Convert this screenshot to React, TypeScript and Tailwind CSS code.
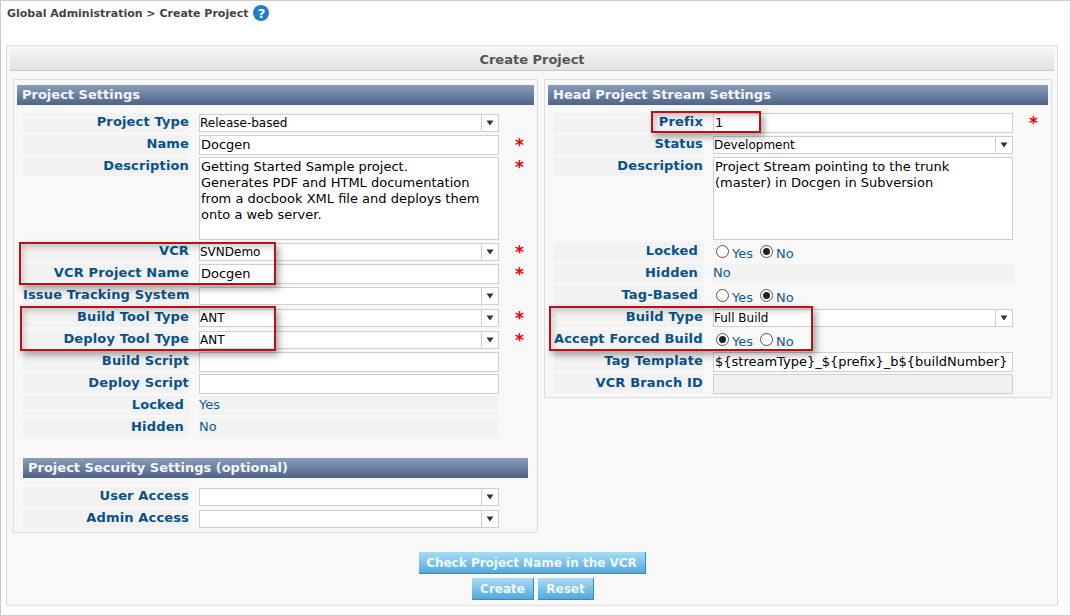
import type { ReactNode } from 'react'

const font = "font-['DejaVu_Sans','Liberation_Sans',sans-serif]"

function Bar({ children, className = '' }: { children: ReactNode; className?: string }) {
  return (
    <div
      className={`flex h-[20px] items-center bg-gradient-to-b from-[#8c9dbb] to-[#4f6488] px-[5px] text-[13px] font-bold text-[#f4f6fa] ${className}`}
    >
      {children}
    </div>
  )
}

function Field({
  label,
  star,
  tall,
  narrow,
  inset,
  children,
}: {
  label: string
  star?: boolean
  tall?: boolean
  narrow?: boolean
  inset?: boolean
  children?: ReactNode
}) {
  return (
    <div className={`mb-[3px] flex items-start ${tall ? 'h-[82px]' : 'h-[19px]'}`}>
      <div
        className={`h-[19px] shrink-0 whitespace-nowrap bg-[#f2f2f2] text-right text-[13px] leading-[18px] font-bold tracking-[0.15px] text-[#07518a] ${
          narrow ? 'w-[149px]' : 'w-[166px]'
        } ${inset ? 'pr-[5px]' : ''}`}
      >
        {label}
      </div>
      <div className="ml-[10px] h-full w-[300px] shrink-0">{children}</div>
      {star && (
        <span className="ml-[16px] text-[17px] leading-[20px] font-bold text-[#f00000]">
          *
        </span>
      )}
    </div>
  )
}

function Select({ value = '' }: { value?: string }) {
  return (
    <div className="mt-[1px] flex h-[18px] border border-[#cfcfcf] bg-white text-[12px] leading-[17px] text-black">
      <div className="flex-1 whitespace-nowrap">{value}</div>
      <div className="flex w-[17px] items-center justify-center border-l border-[#cfcfcf]">
        <svg width="8" height="6" viewBox="0 0 8 6">
          <path d="M0.5 0.5h7L4 5.5z" fill="#333" />
        </svg>
      </div>
    </div>
  )
}

function Input({ value = '', disabled }: { value?: string; disabled?: boolean }) {
  return (
    <input
      readOnly
      value={value}
      className={`block h-[20px] w-full border border-[#cfcfcf] px-[1px] pb-[2px] text-[13px] text-black outline-none ${
        disabled ? 'bg-[#f0f0f0]' : 'bg-white'
      }`}
    />
  )
}

function Area({ value }: { value: string }) {
  return (
    <textarea
      readOnly
      value={value}
      className="block h-[83px] w-full resize-none overflow-hidden border border-[#cfcfcf] bg-white px-[1px] pt-[1px] text-[13px] leading-[16px] text-black outline-none"
    />
  )
}

function Static({ children }: { children: ReactNode }) {
  return <div className="h-[19px] bg-[#f2f2f2] text-[13px] leading-[18px] text-[#0f5a8f]">{children}</div>
}

function Radio({ on, label }: { on?: boolean; label: string }) {
  return (
    <span className="mr-[7px] inline-flex items-start">
      <span className="mt-[3px] flex h-[13px] w-[13px] items-center justify-center rounded-full border border-[#555] bg-white">
        {on && <span className="h-[7px] w-[7px] rounded-full bg-[#222]" />}
      </span>
      <span className="mt-[4px] ml-[3px] text-[13px] leading-[16px] text-[#0f5a8f]">{label}</span>
    </span>
  )
}

function YesNo({ yes }: { yes?: boolean }) {
  return (
    <div className="flex h-[19px] pl-[3px]">
      <Radio on={yes} label="Yes" />
      <Radio on={!yes} label="No" />
    </div>
  )
}

function Button({ children, className = '' }: { children: ReactNode; className?: string }) {
  return (
    <button
      type="button"
      className={`h-[22px] border-r border-b border-[#2f8fc9] bg-gradient-to-b from-[#a9dcf5] to-[#4fa9de] pt-[1px] text-[12px] font-bold text-[#eefaff] ${className}`}
    >
      {children}
    </button>
  )
}

function Callout({ className }: { className: string }) {
  return (
    <div
      className={`pointer-events-none absolute border-2 border-[#b5121b] shadow-[3px_4px_7px_rgba(0,0,0,0.35),inset_4px_5px_6px_-2px_rgba(0,0,0,0.2)] ${className}`}
    />
  )
}

export default function App() {
  return (
    <div className={`relative h-[616px] w-[1071px] overflow-hidden border border-[#cccccc] bg-white ${font}`}>
      <div className="flex h-[44px] items-start pt-[4px] pl-[6px] text-[11px] leading-[18px] font-bold text-[#444444]">
        <span>Global Administration &gt; Create Project</span>
        <span className="ml-[5px] flex h-[16px] w-[16px] items-center justify-center rounded-full bg-[#1f7fc8] text-[13px] leading-none font-bold text-white">
          ?
        </span>
      </div>

      <div className="ml-[5px] h-[561px] w-[1052px] border border-[#dddddd] bg-[#f8f8f8] p-[3px]">
        <div className="flex h-[22px] items-center justify-center border-b border-[#c8c8c8] bg-gradient-to-b from-[#f3f3f3] to-[#e3e3e3] text-[13px] font-bold text-[#555555]">
          Create Project
        </div>

        <div className="mt-[8px] flex items-start">
          <div className="ml-[3px] h-[454px] w-[525px] border border-[#dddddd] px-[3px] pt-[5px]">
            <Bar>Project Settings</Bar>
            <div className="mt-[8px] pl-[6px]">
              <Field label="Project Type">
                <Select value="Release-based" />
              </Field>
              <Field label="Name" star>
                <Input value="Docgen" />
              </Field>
              <Field label="Description" star tall>
                <Area value={'Getting Started Sample project.\nGenerates PDF and HTML documentation\nfrom a docbook XML file and deploys them\nonto a web server.'} />
              </Field>
              <Field label="VCR" star>
                <Select value="SVNDemo" />
              </Field>
              <Field label="VCR Project Name" star>
                <Input value="Docgen" />
              </Field>
              <Field label="Issue Tracking System">
                <Select />
              </Field>
              <Field label="Build Tool Type" star>
                <Select value="ANT" />
              </Field>
              <Field label="Deploy Tool Type" star>
                <Select value="ANT" />
              </Field>
              <Field label="Build Script">
                <Input />
              </Field>
              <Field label="Deploy Script">
                <Input />
              </Field>
              <Field label="Locked" inset>
                <Static>Yes</Static>
              </Field>
              <Field label="Hidden" inset>
                <Static>No</Static>
              </Field>
            </div>
            <div className="mt-[21px] w-[511px] pl-[6px]">
              <Bar className="w-[505px]">Project Security Settings (optional)</Bar>
              <div className="mt-[9px]">
                <Field label="User Access">
                  <Select />
                </Field>
                <Field label="Admin Access">
                  <Select />
                </Field>
              </div>
            </div>
          </div>

          <div className="ml-[6px] h-[319px] w-[508px] border border-[#dddddd] px-[3px] pt-[5px]">
            <Bar>Head Project Stream Settings</Bar>
            <div className="mt-[8px] pl-[6px]">
              <Field label="Prefix" star narrow>
                <Input value="1" />
              </Field>
              <Field label="Status" narrow>
                <Select value="Development" />
              </Field>
              <Field label="Description" tall narrow>
                <Area value={'Project Stream pointing to the trunk\n(master) in Docgen in Subversion'} />
              </Field>
              <Field label="Locked" narrow inset>
                <YesNo />
              </Field>
              <Field label="Hidden" narrow inset>
                <Static>No</Static>
              </Field>
              <Field label="Tag-Based" narrow inset>
                <YesNo />
              </Field>
              <Field label="Build Type" narrow>
                <Select value="Full Build" />
              </Field>
              <Field label="Accept Forced Build" narrow inset>
                <YesNo yes />
              </Field>
              <Field label="Tag Template" narrow>
                <Input value="${streamType}_${prefix}_b${buildNumber}" />
              </Field>
              <Field label="VCR Branch ID" narrow>
                <Input disabled />
              </Field>
            </div>
          </div>
        </div>

        <div className="mt-[19px] flex flex-col items-center">
          <Button className="w-[227px]">Check Project Name in the VCR</Button>
          <div className="mt-[4px] flex gap-[4px] pl-[2px]">
            <Button className="w-[62px]">Create</Button>
            <Button className="w-[56px]">Reset</Button>
          </div>
        </div>
      </div>

      <Callout className="top-[241px] left-[18px] h-[43px] w-[257px]" />
      <Callout className="top-[305px] left-[19px] h-[45px] w-[256px]" />
      <Callout className="top-[110px] left-[650px] h-[22px] w-[110px]" />
      <Callout className="top-[305px] left-[548px] h-[45px] w-[264px]" />
    </div>
  )
}
